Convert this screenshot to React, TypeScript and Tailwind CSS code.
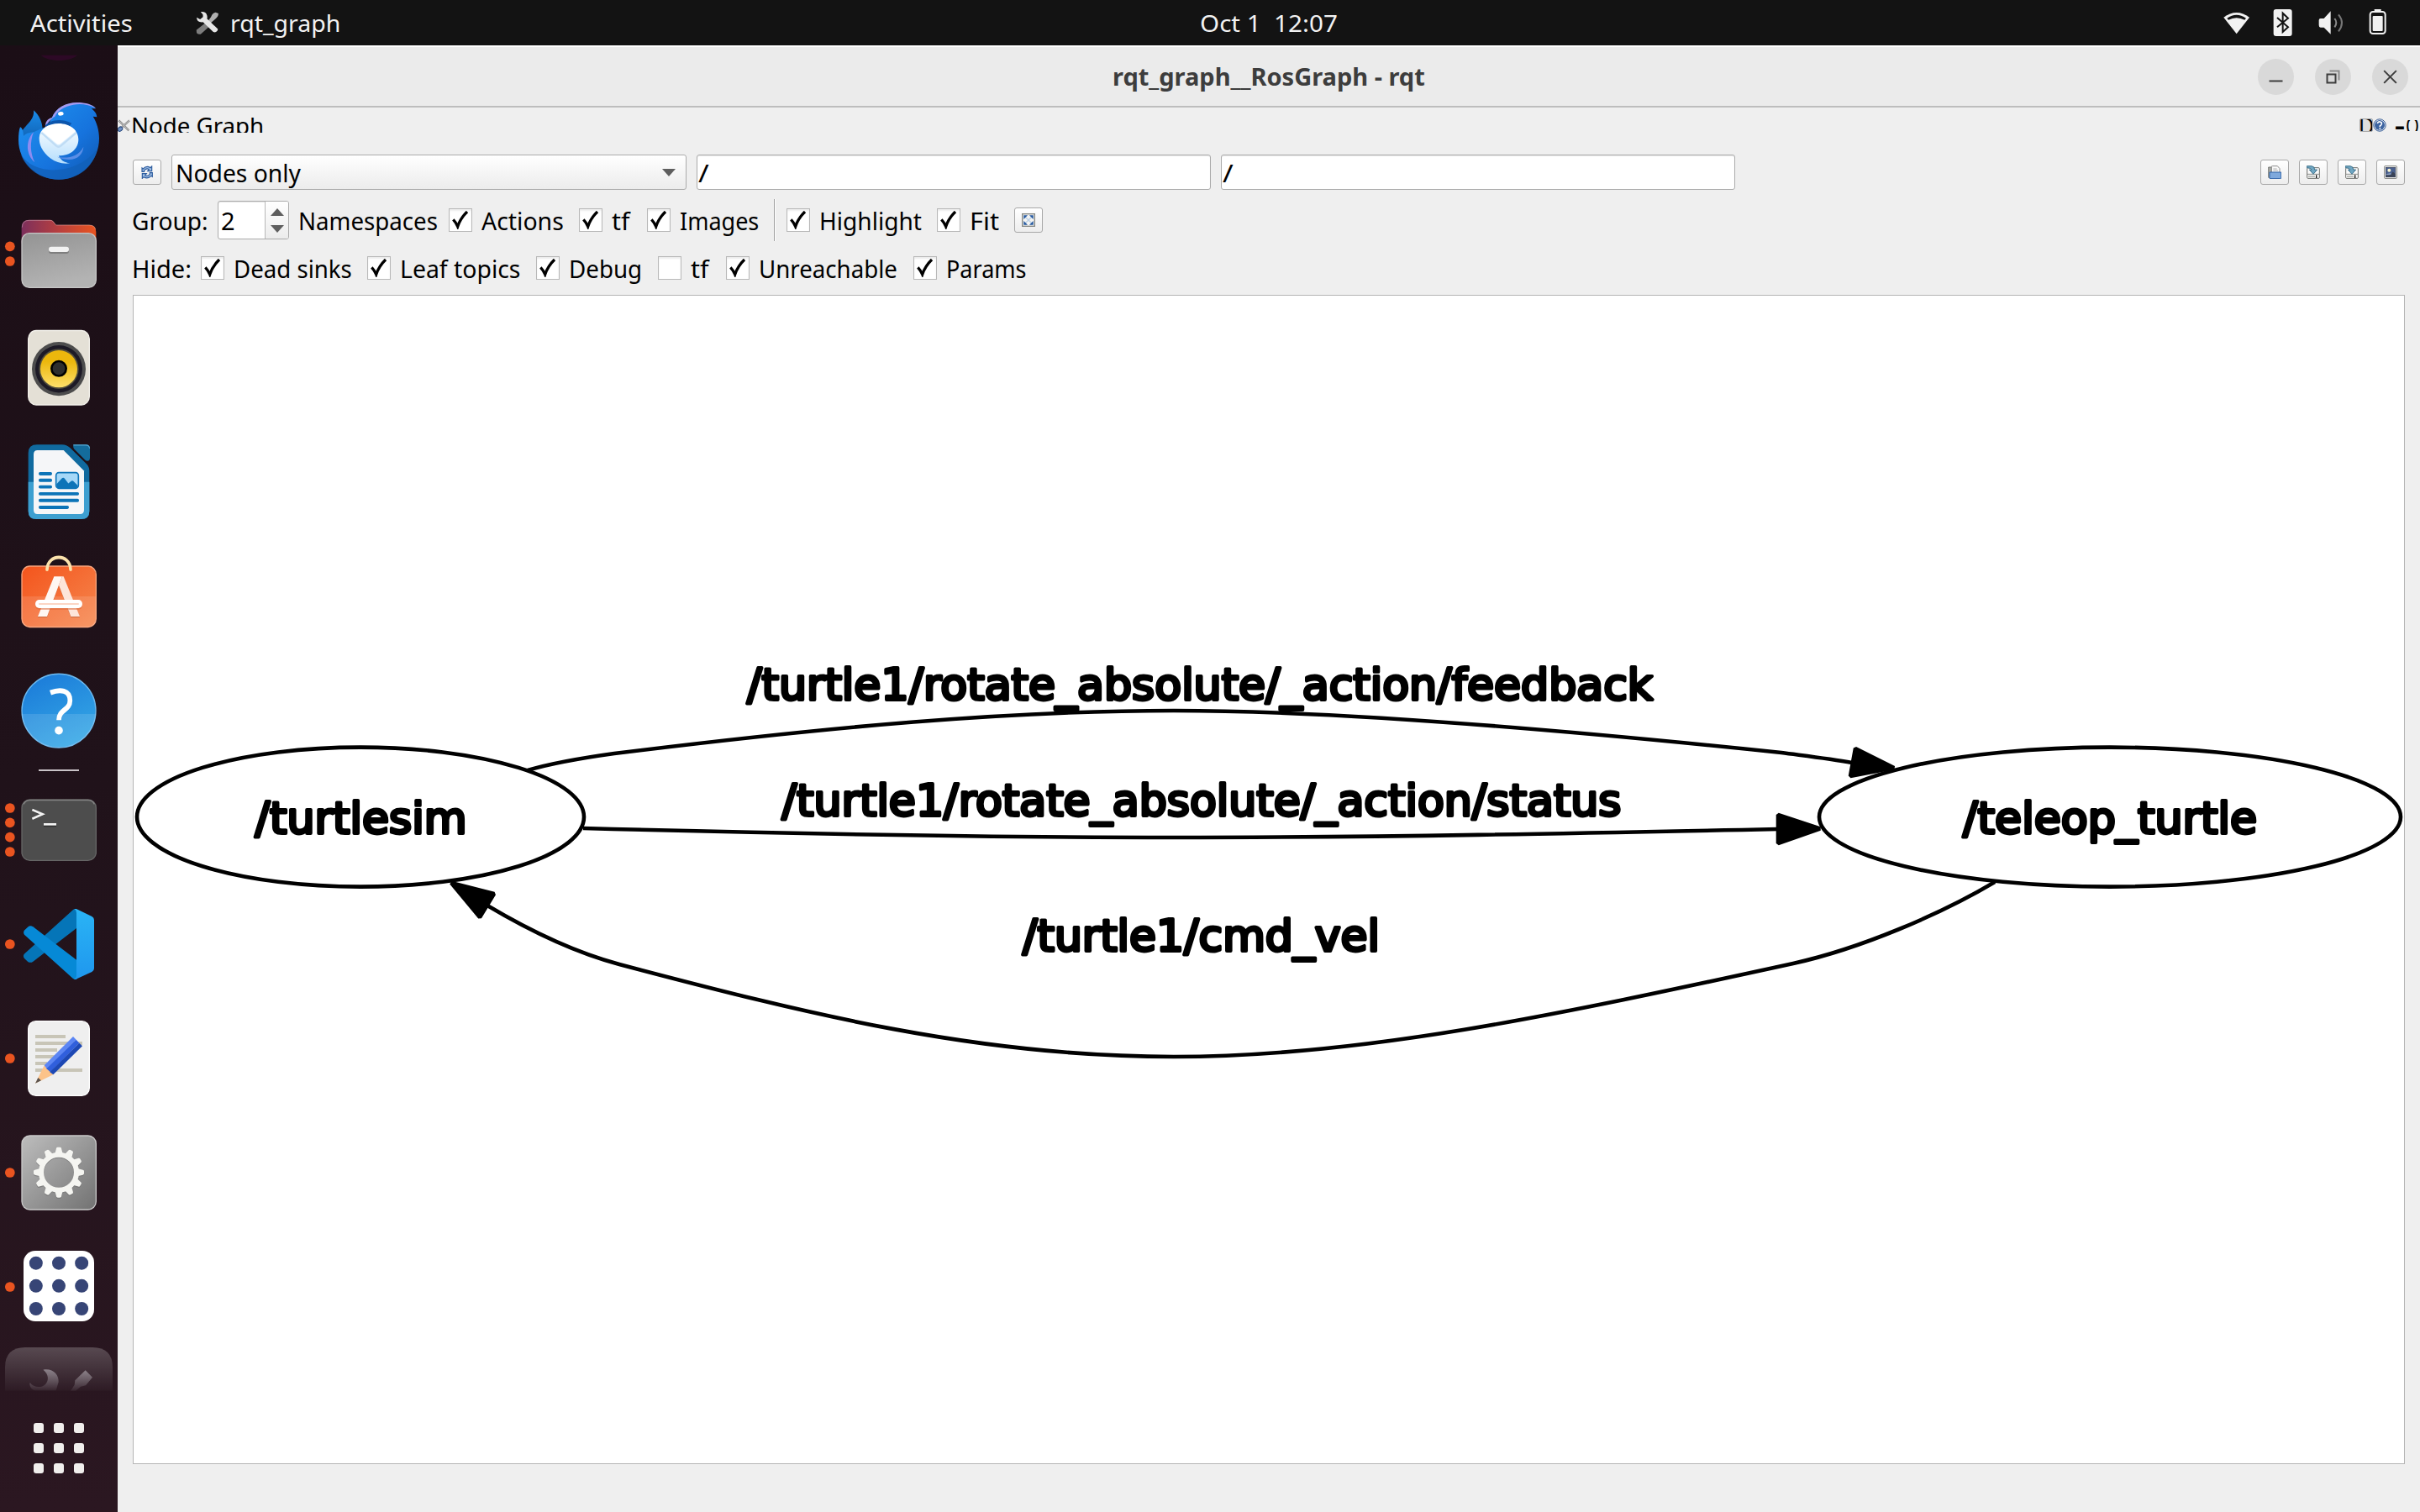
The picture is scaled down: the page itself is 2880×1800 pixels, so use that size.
import { useLayoutEffect, useRef, useState, type ReactNode } from "react";

/* Text squeezed or stretched horizontally to an exact advance width. */
function Fit({ w, children }: { w: number; children: string }) {
  const ref = useRef<HTMLSpanElement>(null);
  const [scale, setScale] = useState(1);
  useLayoutEffect(() => {
    if (ref.current) setScale(w / ref.current.offsetWidth);
  }, [w]);
  return (
    <span className="inline-block shrink-0 whitespace-pre" style={{ width: w }}>
      <span ref={ref} className="inline-block origin-left whitespace-pre" style={{ transform: `scaleX(${scale})` }}>
        {children}
      </span>
    </span>
  );
}

/* ---------- Dock ---------- */

function Slot({ box, children }: { box: string; children: ReactNode }) {
  return (
    <svg className="block h-[136px] w-[140px] shrink-0" viewBox={box} preserveAspectRatio="none">
      {children}
    </svg>
  );
}

function Dots({ ys }: { ys: number[] }) {
  return (
    <>
      {ys.map((y) => (
        <circle key={y} cx="35.5" cy={y} r="17.6" fill="#e95420" />
      ))}
    </>
  );
}

function Thunderbird() {
  return (
    <Slot box="0 297 420 408">
      <defs>
        <linearGradient id="tb" x1="0" y1="0" x2="1" y2="1">
          <stop offset="0" stopColor="#1f95f2" />
          <stop offset=".6" stopColor="#1673dd" />
          <stop offset="1" stopColor="#0f56ad" />
        </linearGradient>
        <linearGradient id="tbEnv" x1="0" y1="0" x2="0" y2="1">
          <stop offset="0" stopColor="#ffffff" />
          <stop offset="1" stopColor="#b5defd" />
        </linearGradient>
        <linearGradient id="tbTail" x1="0" y1="0" x2="0" y2="1">
          <stop offset="0" stopColor="#1a8ae8" />
          <stop offset="1" stopColor="#0b4c96" />
        </linearGradient>
      </defs>
      <path d="M120 394 C140 412 152 436 152 464 L150 540 L80 560 L72 478 C90 446 124 430 120 394Z" fill="url(#tbTail)" />
      <path d="M72 454 C80 456 84 472 84 486 C92 476 104 474 120 472 L170 450 L190 410 C210 376 250 366 290 368 C318 370 336 378 342 388 L326 388 C338 396 346 408 346 418 L332 416 C346 438 354 466 354 494 C354 574 290 641 210 641 C130 641 66 576 66 500 C66 480 68 464 72 454Z" fill="url(#tb)" />
      <path d="M74 550 C100 596 160 612 210 606 C270 600 320 570 348 530 C334 596 280 641 210 641 C146 641 94 606 74 550Z" fill="#1160b8" opacity=".75" />
      <path d="M186 420 C200 384 236 366 274 366 C306 366 332 374 342 387 C318 372 286 370 262 374 C226 380 204 398 196 416 C182 424 168 440 162 456 C160 436 170 424 186 420Z" fill="#a49af0" />
      <path d="M120 472 C102 490 96 516 100 538 C103 556 112 570 124 580 C108 548 106 508 120 472Z" fill="#8d8cf0" />
      <path d="M160 450 C176 430 214 420 256 440 L240 460Z" fill="#0c55ac" />
      <ellipse cx="217" cy="406" rx="10" ry="7" fill="#fff" transform="rotate(-12 217 406)" />
      <path d="M140 492 C142 460 172 441 210 441 C250 441 280 466 280 498 C280 532 252 556 210 556 C214 570 230 582 250 583 C200 590 164 558 148 528 C142 516 140 504 140 492Z" fill="url(#tbEnv)" />
      <path d="M148 474 L200 520 Q209 528 218 520 L272 474" fill="none" stroke="#bfdcf5" strokeWidth="7" />
      <path d="M150 468 L201 512 Q209 519 217 512 L270 468 C250 436 170 436 150 468Z" fill="#fff" />
      <path d="M204 560 C240 568 280 560 298 524 C296 560 262 584 204 560Z" fill="#5a8ee6" />
    </Slot>
  );
}

function Files() {
  return (
    <Slot box="0 705 420 408">
      <defs>
        <linearGradient id="fBack" x1="0" y1="0" x2="1" y2="0">
          <stop offset="0" stopColor="#7c2f5c" />
          <stop offset=".5" stopColor="#b8403f" />
          <stop offset="1" stopColor="#e95420" />
        </linearGradient>
        <linearGradient id="fFront" x1="0" y1="0" x2=".3" y2="1">
          <stop offset="0" stopColor="#939393" />
          <stop offset="1" stopColor="#b3b3b3" />
        </linearGradient>
      </defs>
      <path d="M77 870 V812 Q77 785 104 785 H180 Q186 785 190 790 L200 803 H318 Q343 803 343 828 V870Z" fill="url(#fBack)" />
      <path d="M79 812 Q80 787 104 787 H180 Q186 787 190 792 L200 804 H318 Q338 804 341 820" fill="none" stroke="#fff" strokeOpacity=".3" strokeWidth="3" />
      <rect x="78" y="833" width="265" height="194" rx="27" fill="url(#fFront)" stroke="#c6c6c6" strokeWidth="4" />
      <rect x="174" y="886" width="72" height="20" rx="9" fill="#7e7e7e" />
      <rect x="174" y="881" width="72" height="19" rx="9" fill="#f2f2f2" />
      <Dots ys={[880, 933]} />
    </Slot>
  );
}

function Music() {
  return (
    <Slot box="0 31 420 381">
      <defs>
        <linearGradient id="mus" x1="0" y1="0" x2="0" y2="1">
          <stop offset=".3" stopColor="#ecb70d" />
          <stop offset="1" stopColor="#ffe06a" />
        </linearGradient>
      </defs>
      <rect x="101" y="94" width="218" height="248" rx="28" fill="#e4e0d6" stroke="#f2f0ea" strokeWidth="4" />
      <ellipse cx="210" cy="222" rx="96" ry="90" fill="#4d4d4d" />
      <ellipse cx="210" cy="222" rx="84" ry="79" fill="#1d1a26" />
      <ellipse cx="210" cy="222" rx="71" ry="67" fill="#55503c" />
      <ellipse cx="210" cy="222" rx="66" ry="62" fill="url(#mus)" />
      <ellipse cx="210" cy="221" rx="30" ry="28" fill="#000" />
      <ellipse cx="210" cy="221" rx="22" ry="21" fill="#2e2e2e" />
    </Slot>
  );
}

function Writer() {
  return (
    <Slot box="0 412 420 381">
      <path d="M101 502 Q101 474 132 474 H222 Q238 474 250 485 L308 538 Q319 548 319 562 V696 Q319 723 290 723 H130 Q101 723 101 696Z" fill="#106a9f" />
      <path d="M101 599 H319 V696 Q319 723 290 723 H130 Q101 723 101 696Z" fill="#3d9fd0" />
      <path d="M262 474 H308 Q321 474 321 487 V518 Q321 530 311 529 Q306 528 302 524 L264 488 Q260 482 262 474Z" fill="#146c9c" />
      <path d="M262 476 H306 Q318 476 320 487" fill="none" stroke="#56a6d0" strokeWidth="3" />
      <path d="M134 493 H227 L300 562 V692 Q300 706 286 706 H134 Q120 706 120 692 V507 Q120 493 134 493Z" fill="#f5f6f8" />
      <g fill="#0c74b8">
        <rect x="138" y="566" width="48" height="11" rx="5" />
        <rect x="138" y="588" width="48" height="11" rx="5" />
        <rect x="138" y="610" width="48" height="11" rx="5" />
        <rect x="138" y="633" width="144" height="11" rx="5" />
        <rect x="138" y="655" width="144" height="11" rx="5" />
        <rect x="138" y="678" width="108" height="11" rx="5" />
      </g>
      <rect x="200" y="568" width="80" height="52" rx="10" fill="#a5d8f8" stroke="#0c74b8" strokeWidth="5" />
      <path d="M202 606 L220 588 Q226 582 232 589 L244 604 L254 596 Q259 593 264 598 L278 611 Q277 620 268 620 H212 Q202 620 202 610Z" fill="#0c74b8" />
    </Slot>
  );
}

function Store() {
  return (
    <Slot box="0 792 420 381">
      <defs>
        <linearGradient id="st" x1="0" y1="0" x2="1" y2="1">
          <stop offset="0" stopColor="#f4541c" />
          <stop offset="1" stopColor="#f5884f" />
        </linearGradient>
      </defs>
      <rect x="78" y="879" width="265" height="203" rx="28" fill="url(#st)" stroke="#f9a47c" strokeWidth="4" />
      <path d="M79 980 H342 V1054 Q342 1081 315 1081 H106 Q79 1081 79 1054Z" fill="#fff" opacity=".12" />
      <path d="M168 890 C170 836 250 836 252 890" fill="none" stroke="#fbe3ac" strokeWidth="11" strokeLinecap="round" />
      <path d="M135 1050 L193 915 H227 L285 1050 H253 L210 944 L168 1050Z" fill="#c9673d" />
      <path d="M135 1047 L193 913 H222 L210 942 L168 1047Z" fill="#fff7f2" />
      <path d="M210 942 L222 913 H227 L285 1047 H253Z" fill="#fde5da" />
      <rect x="126" y="994" width="168" height="30" rx="14" fill="#d8683b" opacity=".6" />
      <rect x="126" y="991" width="168" height="28" rx="14" fill="#fff" />
      <rect x="138" y="1002" width="144" height="6" rx="3" fill="#fcd5c4" />
    </Slot>
  );
}

function Help() {
  return (
    <Slot box="0 1173 420 381">
      <defs>
        <linearGradient id="hp" x1=".2" y1="0" x2=".7" y2="1">
          <stop offset="0" stopColor="#1b7bd9" />
          <stop offset="1" stopColor="#35a8e6" />
        </linearGradient>
      </defs>
      <ellipse cx="210" cy="1361" rx="132" ry="123" fill="url(#hp)" stroke="#6cb8ee" strokeWidth="4" />
      <path d="M78 1372 H342 C336 1436 280 1484 210 1484 C140 1484 84 1436 78 1372Z" fill="#fff" opacity=".12" />
      <path d="M180 1301 C215 1288 250 1292 250 1327 C250 1360 210 1356 210 1392" fill="none" stroke="#fff" strokeWidth="17" />
      <ellipse cx="210" cy="1427" rx="14.5" ry="13.5" fill="#fff" />
    </Slot>
  );
}

function Terminal() {
  return (
    <Slot box="0 60 420 408">
      <rect x="78" y="156" width="265" height="217" rx="29" fill="#4d4d4d" stroke="#666" strokeWidth="4" />
      <path d="M84 172 Q92 158 108 158 H314 Q330 158 337 172" fill="none" stroke="#848484" strokeWidth="4" />
      <path d="M115 194 L152 209 L115 224" fill="none" stroke="#2c2c2c" strokeWidth="8" />
      <path d="M115 192 L152 208 L115 224" fill="none" stroke="#f4f4f4" strokeWidth="8" />
      <rect x="156" y="246" width="45" height="7" fill="#2e2e2e" />
      <rect x="156" y="240" width="45" height="8" fill="#f4f4f4" />
      <Dots ys={[186, 238, 290, 342]} />
    </Slot>
  );
}

function Code() {
  return (
    <Slot box="0 468 420 408">
      <defs>
        <linearGradient id="vs" x1="0" y1="0" x2="0" y2="1">
          <stop offset="0" stopColor="#2ab4f5" />
          <stop offset="1" stopColor="#1f97ee" />
        </linearGradient>
      </defs>
      <path d="M262 548 Q268 544 274 547 V614 L118 734 Q108 741 99 734 L87 723 Q80 714 88 706Z" fill="#0575b8" />
      <path d="M118 610 L274 729 V797 Q267 800 260 794 L87 638 Q81 630 88 622 L99 611 Q108 603 118 610Z" fill="#0689d6" />
      <path d="M265 546 Q269 545 274 547 L328 573 Q336 577 336 586 V758 Q336 767 328 771 L274 796 Q268 799 264 797 Q273 794 273 784 V560 Q273 550 265 546Z" fill="url(#vs)" />
      <Dots ys={[672]} />
    </Slot>
  );
}

function Editor() {
  return (
    <Slot box="0 876 420 408">
      <rect x="101" y="947" width="218" height="266" rx="27" fill="#efefef" stroke="#fff" strokeWidth="4" />
      <g fill="#c8c5b7">
        <rect x="126" y="996" width="108" height="12" />
        <rect x="126" y="1020" width="168" height="12" />
        <rect x="126" y="1044" width="78" height="12" />
        <rect x="126" y="1068" width="68" height="12" />
        <rect x="126" y="1092" width="42" height="12" />
        <rect x="126" y="1116" width="168" height="12" />
      </g>
      <path d="M126 1169 L158 1105 L190 1138Z" fill="#fcc38a" />
      <path d="M126 1169 L136 1149 L147 1159Z" fill="#5b5450" />
      <path d="M158 1105 L261 1002 L272 1013 L168 1118Z" fill="#5c86f4" />
      <path d="M166 1117 L272 1013 L283 1025 L180 1129Z" fill="#305fdc" />
      <path d="M178 1129 L283 1025 L294 1036 L190 1138Z" fill="#1d48b4" />
      <Dots ys={[1080]} />
    </Slot>
  );
}

const teeth = Array.from({ length: 12 }, (_, i) => i * 30);

function Settings() {
  return (
    <Slot box="0 -66 420 408">
      <defs>
        <linearGradient id="se" x1="0" y1="0" x2="1" y2="1">
          <stop offset="0" stopColor="#bdbdbd" />
          <stop offset="1" stopColor="#727272" />
        </linearGradient>
      </defs>
      <rect x="78" y="6" width="265" height="264" rx="29" fill="url(#se)" stroke="#c9c9c9" strokeWidth="4" />
      <g transform="translate(210 141)" fill="#6f6f6f" opacity=".6">
        <circle r="63" fill="none" stroke="#6f6f6f" strokeWidth="17" />
        {teeth.map((a) => (
          <path key={a} d="M-13 -66 L-9 -86 Q-8 -90 -4 -90 H4 Q8 -90 9 -86 L13 -66Z" transform={`rotate(${a})`} />
        ))}
      </g>
      <g transform="translate(210 137)" fill="#f5f5f1">
        <circle r="63" fill="none" stroke="#f5f5f1" strokeWidth="18" />
        {teeth.map((a) => (
          <path key={a} d="M-14 -66 L-9 -86 Q-8 -90 -4 -90 H4 Q8 -90 9 -86 L14 -66Z" transform={`rotate(${a})`} />
        ))}
      </g>
      <Dots ys={[138]} />
    </Slot>
  );
}

function RosGrid() {
  return (
    <Slot box="0 342 420 408">
      <rect x="84" y="417" width="252" height="252" rx="42" fill="#fff" />
      {[461, 542.5, 624].map((y) =>
        [128.5, 210, 291.5].map((x) => <circle key={`${x}-${y}`} cx={x} cy={y} r="24" fill="#374576" />)
      )}
      <Dots ys={[546]} />
    </Slot>
  );
}

function Dock() {
  return (
    <nav className="flex w-[140px] shrink-0 flex-col bg-linear-to-b from-[#1b0e16] via-[#20121a] to-[#2b1721]">
      <svg className="block h-[45px] w-[140px] shrink-0" viewBox="0 162 420 135">
        <path d="M146 197 H276 C250 222 172 222 146 197Z" fill="#32092a" opacity=".8" />
      </svg>
      <Thunderbird />
      <Files />
      <Music />
      <Writer />
      <Store />
      <Help />
      <div className="flex h-[5px] shrink-0 justify-center pt-px">
        <div className="h-[2px] w-12 bg-[#c9c3c7]" />
      </div>
      <Terminal />
      <Code />
      <Editor />
      <Settings />
      <RosGrid />
      <svg className="block h-14 w-[140px] shrink-0" viewBox="0 750 420 168">
        <defs>
          <linearGradient id="run" x1="0" y1="0" x2="0" y2="1">
            <stop offset="0" stopColor="#fff" stopOpacity=".22" />
            <stop offset="1" stopColor="#fff" stopOpacity=".02" />
          </linearGradient>
          <linearGradient id="fade" x1="0" y1="0" x2="0" y2="1">
            <stop offset="0" stopColor="#a39ba3" stopOpacity=".75" />
            <stop offset="1" stopColor="#a39ba3" stopOpacity=".08" />
          </linearGradient>
        </defs>
        <path d="M18 917 V834 Q18 762 90 762 H330 Q402 762 402 834 V917Z" fill="url(#run)" />
        <path d="M154 842 C190 836 210 860 209 886 L200 916 H124 C108 910 104 896 107 888 C116 900 132 906 148 902 C174 894 180 862 154 842Z" fill="url(#fade)" />
        <path d="M305 844 L330 869 L306 898 L288 902 L270 917 H252 L266 896 L268 880Z" fill="url(#fade)" />
      </svg>
      <svg className="block h-36 w-[140px] shrink-0" viewBox="0 918 420 432">
        {[1032, 1104, 1176].map((y) =>
          [120, 192, 264].map((x) => <rect key={`${x}-${y}`} x={x} y={y} width="36" height="36" rx="9" fill="#f0eeec" />)
        )}
      </svg>
    </nav>
  );
}

/* ---------- Top bar and title bar ---------- */

function TopBar() {
  return (
    <header className="flex h-[54px] shrink-0 items-center bg-[#131313] text-[28px] leading-none text-[#f2f2f2]">
      <div className="flex w-[1428px] items-center pl-[36px]">
        <Fit w={122}>Activities</Fit>
        <svg className="ml-[74px] h-[30px] w-[30px]" viewBox="696 38 88 88">
          <path d="M701 108 L738 78 L752 90 L716 122 Q708 124 702 118Z" fill="#7d7d7d" />
          <path d="M768 46 L778 50 Q778 62 766 70 L748 86 L740 78 L752 62 Q758 48 768 46Z" fill="#b0b0b0" />
          <path d="M716 44 Q734 42 738 56 Q740 64 738 68 L776 104 Q776 112 766 116 L760 114 L724 80 Q702 82 702 64 L714 70 L724 62 V54Z" fill="#e6e6e6" />
        </svg>
        <span className="ml-[12px]">
          <Fit w={131}>rqt_graph</Fit>
        </span>
      </div>
      <Fit w={164}>{"Oct 1  12:07"}</Fit>
      <svg className="mr-[37px] ml-auto h-[54px] w-[200px]" viewBox="190 0 600 162">
        <path d="M200 62 Q246 28 292 62 L246 121Z" fill="#f2f2f2" />
        <path d="M212 65 Q246 42 280 65 L275 71 Q246 56 217 71Z" fill="#131313" />
        <rect x="378" y="33" width="66" height="96" rx="9" fill="#f2f2f2" />
        <path d="M391 63 L430 97 L411 114 V47 L430 65 L391 97" fill="none" stroke="#131313" strokeWidth="6" />
        <path d="M540 72 Q540 66 546 66 H558 L582 40 V122 L558 98 H546 Q540 98 540 90Z" fill="#f2f2f2" />
        <path d="M596 66 Q608 81 596 97" fill="none" stroke="#8a8a8a" strokeWidth="6" />
        <path d="M610 52 Q634 81 610 112" fill="none" stroke="#777" strokeWidth="6" />
        <rect x="738" y="33" width="24" height="10" fill="#f2f2f2" />
        <rect x="723" y="42" width="54" height="78" rx="10" fill="none" stroke="#f2f2f2" strokeWidth="6" />
        <rect x="732" y="57" width="36" height="54" rx="3" fill="#f2f2f2" />
      </svg>
    </header>
  );
}

function WinButton({ children }: { children: ReactNode }) {
  return (
    <button className="flex h-[43px] w-[43px] items-center justify-center rounded-full bg-[#d9d9d9]">
      <svg className="h-[43px] w-[43px]" viewBox="-64.5 -64.5 129 129" fill="none" stroke="#3d3d3d" strokeWidth="6">
        {children}
      </svg>
    </button>
  );
}

function TitleBar() {
  return (
    <div className="grid h-[74px] shrink-0 grid-cols-[1fr_auto_1fr] items-center border-t-2 border-b-2 border-t-white border-b-[#bdbdbd] bg-[#ebebeb]">
      <span />
      <h1 className="text-[28px] leading-none font-bold text-[#3d3d3d]">
        <Fit w={372}>rqt_graph__RosGraph - rqt</Fit>
      </h1>
      <div className="flex justify-end gap-[25px] pr-[14px]">
        <WinButton>
          <path d="M-24 15 H24" />
        </WinButton>
        <WinButton>
          <rect x="-21" y="-9" width="30" height="30" />
          <path d="M-12 -21 H21 V12" stroke="#8b8b8b" />
        </WinButton>
        <WinButton>
          <path d="M-22 -22 L22 22 M22 -22 L-22 22" />
        </WinButton>
      </div>
    </div>
  );
}

function DockTitle() {
  return (
    <div className="mt-3 flex h-[18px] shrink-0 items-center overflow-hidden text-[28px] leading-[18px] text-black">
      <svg className="h-4 w-4" viewBox="420 423 48 48">
        <path d="M424 430 L460 466 M462 430 L436 454" stroke="#858585" strokeWidth="7" />
        <path d="M424 430 L460 466 M462 430 L436 454" stroke="#e8e8e8" strokeWidth="2" />
        <ellipse cx="429" cy="461" rx="9" ry="7" fill="#6e8fc0" stroke="#24467c" strokeWidth="3" transform="rotate(-40 429 461)" />
      </svg>
      <Fit w={158}>Node Graph</Fit>
      <div className="mr-px ml-auto flex h-4 items-center">
        <div className="flex h-4 w-4 justify-center overflow-hidden rounded-[2px] border border-[#a9a9a9] bg-[#dedede] leading-[14px]">
          <Fit w={18}>D</Fit>
        </div>
        <svg className="h-4 w-4" viewBox="0 0 48 48">
          <circle cx="24" cy="24" r="21.5" fill="#fff" stroke="#2f5591" strokeWidth="3" />
          <circle cx="24" cy="24" r="18" fill="#3c63a0" />
          <path d="M16 18 Q18 11 25 12 Q32 13 31 20 Q30 24 25 27 V31" fill="none" stroke="#fff" strokeWidth="5" />
          <circle cx="25" cy="37" r="3" fill="#fff" />
        </svg>
        <div className="ml-[10px] h-4 w-[12px] font-bold leading-[16px]">
          <Fit w={12}>-</Fit>
        </div>
        <div className="ml-px flex h-[13px] w-4 overflow-hidden leading-[13px]">
          <Fit w={16}>O</Fit>
        </div>
      </div>
    </div>
  );
}

/* ---------- Toolbar ---------- */

function ToolButton({ children }: { children: ReactNode }) {
  return (
    <button className="flex h-[30px] w-[34px] shrink-0 items-center justify-center rounded-[3px] border border-[#a8a8a8] bg-linear-to-b from-white to-[#ededed]">
      <svg className="h-4 w-4" viewBox="0 0 48 48">
        {children}
      </svg>
    </button>
  );
}

function SaveIcon() {
  return (
    <>
      <rect x="2" y="8" width="44" height="38" rx="3" fill="#fafafa" stroke="#6d6f6b" strokeWidth="3" />
      <path d="M2 31 H46" stroke="#8a8c88" strokeWidth="3" />
      <path d="M6 39 H30" stroke="#b5b7b3" strokeWidth="5" />
      <path d="M35 34 V45" stroke="#111" strokeWidth="4" />
      <path d="M1 2 H18 Q29 3 29 15 H38 L24 31 L10 15 H18 Q17 9 1 8Z" fill="#6fa6c2" stroke="#2e6480" strokeWidth="2.5" />
    </>
  );
}

function LineEdit() {
  return (
    <div className="flex h-[42px] w-[612px] shrink-0 items-center rounded-[3px] border border-[#ababab] bg-white pl-px shadow-[inset_0_1px_1px_#e4e4e4]">
      <Fit w={13}>/</Fit>
    </div>
  );
}

function FilterRow() {
  return (
    <div className="mt-[26px] flex h-[42px] shrink-0 items-center pr-[18px] pl-[18px]">
      <ToolButton>
        <path d="M6 22 V9 L10 12 Q22 -1 36 8 L41 3 V20 H26 L31 14 Q22 8 14 18 V22Z" fill="#9fbfe6" stroke="#2d5c9e" strokeWidth="3.5" />
        <path d="M43 26 V40 L39 37 Q26 50 12 41 L7 46 V29 H22 L17 35 Q26 41 34 31 V26Z" fill="#9fbfe6" stroke="#2d5c9e" strokeWidth="3.5" />
      </ToolButton>
      <div className="ml-[12px] flex h-[42px] w-[613px] shrink-0 items-center rounded-[3px] border border-[#ababab] bg-linear-to-b from-white to-[#ececec] pr-[12px] pl-[4px]">
        <Fit w={149}>Nodes only</Fit>
        <svg className="ml-auto h-[9px] w-4" viewBox="0 0 16 9">
          <path d="M0 0 H16 L8 9Z" fill="#5e5e5e" />
        </svg>
      </div>
      <div className="ml-[12px] flex gap-[12px]">
        <LineEdit />
        <LineEdit />
      </div>
      <div className="ml-auto flex gap-[12px]">
        <ToolButton>
          <path d="M2 6 H14 V44 H4 Q1 44 2 40Z" fill="#a7a9a5" stroke="#6b6d69" strokeWidth="2.5" />
          <path d="M13 26 V4 Q13 2 16 2 H34 L42 11 V26Z" fill="#fbfbfb" stroke="#777" strokeWidth="2.5" />
          <path d="M19 12 H32 M19 18 H36" stroke="#b0b0b0" strokeWidth="3" />
          <path d="M6 24 H47 V45 Q47 47 44 47 H9 Q6 47 6 44Z" fill="#7fa9dc" stroke="#2f62a6" strokeWidth="3" />
        </ToolButton>
        <ToolButton>
          <SaveIcon />
        </ToolButton>
        <ToolButton>
          <SaveIcon />
        </ToolButton>
        <ToolButton>
          <rect x="2" y="2" width="44" height="44" rx="2" fill="#f7f7f5" stroke="#7d7f7b" strokeWidth="3" />
          <rect x="7" y="7" width="34" height="34" fill="#4a6190" stroke="#2c3654" strokeWidth="2" />
          <circle cx="19" cy="17" r="6" fill="#fbf6cf" />
          <path d="M7 32 L24 33 L32 22 L41 31 V41 H7Z" fill="#3a4356" />
          <path d="M8 31 L24 27 L27 31 L20 34 H8Z" fill="#8ba0c4" />
        </ToolButton>
      </div>
    </div>
  );
}

function Check({ label, w, slot, on = true }: { label: string; w: number; slot: number; on?: boolean }) {
  return (
    <label className="flex shrink-0 items-center" style={{ width: slot }}>
      <span className="mr-[11px] flex h-7 w-7 shrink-0 items-center justify-center border border-[#b8b8b8] bg-white shadow-[inset_0_2px_2px_#ececec]">
        {on && (
          <svg className="h-[22px] w-[20px]" viewBox="0 0 60 66" fill="none" stroke="#000">
            <path d="M4 31 Q13 40 20 56 Q30 26 54 3" strokeWidth="10" />
          </svg>
        )}
      </span>
      <Fit w={w}>{label}</Fit>
    </label>
  );
}

function GroupRow() {
  return (
    <div className="mt-[12px] flex h-12 shrink-0 items-center pl-[17px]">
      <Fit w={91}>Group:</Fit>
      <div className="ml-[11px] flex h-[46px] w-[85px] shrink-0 items-stretch overflow-hidden rounded-[3px] border border-[#ababab] bg-white shadow-[inset_0_1px_1px_#e4e4e4]">
        <div className="flex w-[55px] items-center pl-[3px]">
          <Fit w={17}>2</Fit>
        </div>
        <div className="flex flex-1 flex-col items-center justify-center gap-[11px] border-l border-[#b8b8b8] bg-linear-to-b from-white to-[#ececec]">
          <svg className="h-[9px] w-4" viewBox="0 0 16 9">
            <path d="M0 9 H16 L8 0Z" fill="#5e5e5e" />
          </svg>
          <svg className="h-[9px] w-4" viewBox="0 0 16 9">
            <path d="M0 0 H16 L8 9Z" fill="#5e5e5e" />
          </svg>
        </div>
      </div>
      <span className="ml-[11px] w-[179px] shrink-0">
        <Fit w={166}>Namespaces</Fit>
      </span>
      <Check label="Actions" w={98} slot={155} />
      <Check label="tf" w={21} slot={81} />
      <Check label="Images" w={94} slot={151} />
      <div className="h-[50px] w-[2px] shrink-0 border-l border-[#9f9f9f] bg-white" />
      <div className="w-[13px] shrink-0" />
      <Check label="Highlight" w={122} slot={179} />
      <Check label="Fit" w={35} slot={92} />
      <ToolButton>
        <rect x="2" y="2" width="44" height="44" fill="#f4f4f2" stroke="#858783" strokeWidth="4" />
        <path d="M14 14 L34 34 M34 14 L14 34" stroke="#b9cfe8" strokeWidth="4" />
        <path d="M7 7 H21 L7 21Z M41 7 V21 L27 7Z M7 41 V27 L21 41Z M41 41 H27 L41 27Z" fill="#2458a0" />
      </ToolButton>
    </div>
  );
}

function HideRow() {
  return (
    <div className="mt-[19px] flex h-7 shrink-0 items-center pl-[17px]">
      <span className="w-[82px] shrink-0">
        <Fit w={71}>Hide:</Fit>
      </span>
      <Check label="Dead sinks" w={141} slot={198} />
      <Check label="Leaf topics" w={143} slot={201} />
      <Check label="Debug" w={87} slot={145} />
      <Check label="tf" w={21} slot={81} on={false} />
      <Check label="Unreachable" w={165} slot={223} />
      <Check label="Params" w={96} slot={150} />
    </div>
  );
}

/* ---------- Graph ---------- */

const labels = [
  { t: "/turtlesim", x: 303.5, y: 991.5, w: 252 },
  { t: "/teleop_turtle", x: 2336, y: 991.5, w: 350 },
  { t: "/turtle1/rotate_absolute/_action/feedback", x: 889, y: 832.5, w: 1078 },
  { t: "/turtle1/rotate_absolute/_action/status", x: 930.5, y: 970.5, w: 999 },
  { t: "/turtle1/cmd_vel", x: 1217, y: 1131.5, w: 425 },
];

function Graph() {
  return (
    <div className="mx-[18px] mt-[18px] h-[1392px] shrink-0 border border-[#b5b5b5] bg-white">
      <svg className="block h-[1390px] w-[2702px]" viewBox="159 352 2702 1390">
        <g fill="none" stroke="#000" strokeWidth="4.6">
          <ellipse cx="429" cy="972.6" rx="266" ry="83" />
          <ellipse cx="2511" cy="972.6" rx="346" ry="83" />
          <path d="M628 917 C655 909 695 902 731 897 C990 865 1200 846 1397 846 C1600 846 1900 873 2120 896 C2150 900 2177 903 2204 908" />
          <path d="M694 986 C920 992 1160 997 1397 997 C1640 997 1880 992 2116 987" />
          <path d="M2374 1050 C2310 1088 2215 1129 2134 1147 C1850 1209 1620 1258 1397 1258 C1165 1258 960 1207 737 1148 C685 1134 627 1106 580 1078" />
        </g>
        <g fill="#000" stroke="#000" strokeWidth="4.6" strokeLinejoin="bevel">
          <path d="M2208 891 L2202 924 L2254 914Z" />
          <path d="M2116 970 V1004 L2166 986.5Z" />
          <path d="M588 1064 L571 1092 L537 1051Z" />
        </g>
        <g className="font-['DejaVu_Sans',sans-serif]" fontSize="52" fill="#000" stroke="#000" strokeWidth="3.9" strokeLinejoin="round">
          {labels.map((l) => (
            <text key={l.t} x={l.x} y={l.y} textLength={l.w} lengthAdjust="spacingAndGlyphs">
              {l.t}
            </text>
          ))}
        </g>
      </svg>
    </div>
  );
}

export default function App() {
  return (
    <div className="flex h-[1800px] w-[2880px] flex-col overflow-hidden font-['Noto_Sans',sans-serif]">
      <TopBar />
      <div className="flex min-h-0 flex-1">
        <Dock />
        <main className="flex min-w-0 flex-1 flex-col bg-[#efefef] text-[29px] leading-none text-black">
          <TitleBar />
          <DockTitle />
          <FilterRow />
          <GroupRow />
          <HideRow />
          <Graph />
        </main>
      </div>
    </div>
  );
}
